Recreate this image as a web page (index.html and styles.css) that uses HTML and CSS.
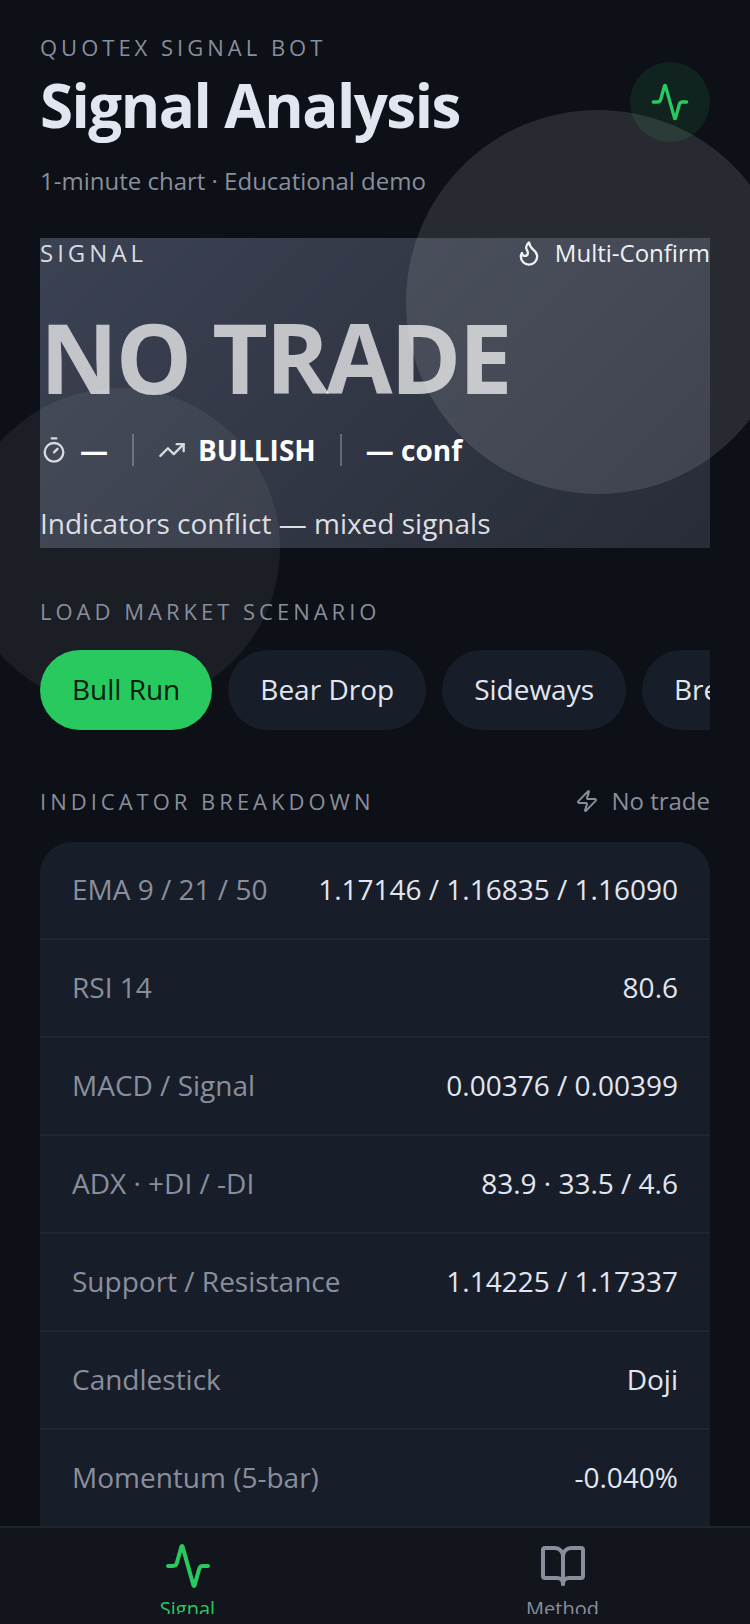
FILE: index.html
```
<!DOCTYPE html>
<html lang="en">
<head>
  <meta charset="UTF-8">
  <meta name="viewport" content="width=device-width, initial-scale=1">
  <title>Signal Analysis</title>
  <link rel="stylesheet" href="styles.css">
</head>
<body>
  <div class="app">
    <main class="screen">
      <header class="header">
        <div>
          <p class="eyebrow">QUOTEX SIGNAL BOT</p>
          <h1>Signal Analysis</h1>
          <p class="subtitle">1-minute chart · Educational demo</p>
        </div>
        <div class="badge">
          <svg class="icon icon-lg" viewBox="0 0 24 24"><path d="M22 12h-2.48a2 2 0 0 0-1.93 1.46l-2.35 8.36a.25.25 0 0 1-.48 0L9.24 2.18a.25.25 0 0 0-.48 0l-2.35 8.36A2 2 0 0 1 4.49 12H2"/></svg>
        </div>
      </header>

      <section class="hero">
        <div class="blob blob-top"></div>
        <div class="blob blob-bottom"></div>
        <div class="hero-content">
          <div class="hero-head">
            <span class="hero-label">SIGNAL</span>
            <span class="tag">
              <svg class="icon icon-md" viewBox="0 0 24 24"><path d="M8.5 14.5A2.5 2.5 0 0 0 11 12c0-1.38-.5-2-1-3-1.072-2.143-.224-4.054 2-6 .5 2.5 2 4.9 4 6.5 2 1.6 3 3.5 3 5.5a7 7 0 1 1-14 0c0-1.153.433-2.294 1-3a2.5 2.5 0 0 0 2.5 2.5z"/></svg>
              Multi-Confirm
            </span>
          </div>
          <p class="hero-signal">NO TRADE</p>
          <div class="hero-meta">
            <span class="meta-item">
              <svg class="icon icon-md" viewBox="0 0 24 24"><path d="M10 2h4M12 14l3-3"/><circle cx="12" cy="14" r="8"/></svg>
              —
            </span>
            <span class="divider"></span>
            <span class="meta-item">
              <svg class="icon icon-md" viewBox="0 0 24 24"><path d="M22 7l-8.5 8.5-5-5L2 17"/><path d="M16 7h6v6"/></svg>
              BULLISH
            </span>
            <span class="divider"></span>
            <span class="meta-item">— conf</span>
          </div>
          <p class="hero-reason">Indicators conflict — mixed signals</p>
        </div>
      </section>

      <section class="scenarios">
        <h2 class="eyebrow">LOAD MARKET SCENARIO</h2>
        <div class="pills">
          <button type="button" class="pill active">Bull Run</button>
          <button type="button" class="pill">Bear Drop</button>
          <button type="button" class="pill">Sideways</button>
          <button type="button" class="pill">Breakout</button>
        </div>
      </section>

      <section class="breakdown">
        <div class="section-head">
          <h2 class="eyebrow">INDICATOR BREAKDOWN</h2>
          <span class="tag tag-muted">
            <svg class="icon icon-sm" viewBox="0 0 24 24"><path d="M4 14a1 1 0 0 1-.78-1.63l9.9-10.2a.5.5 0 0 1 .86.46l-1.92 6.02A1 1 0 0 0 13 10h7a1 1 0 0 1 .78 1.63l-9.9 10.2a.5.5 0 0 1-.86-.46l1.92-6.02A1 1 0 0 0 11 14z"/></svg>
            No trade
          </span>
        </div>
        <table class="indicators">
          <tbody>
            <tr><th scope="row">EMA 9 / 21 / 50</th><td>1.17146 / 1.16835 / 1.16090</td></tr>
            <tr><th scope="row">RSI 14</th><td>80.6</td></tr>
            <tr><th scope="row">MACD / Signal</th><td>0.00376 / 0.00399</td></tr>
            <tr><th scope="row">ADX · +DI / -DI</th><td>83.9 · 33.5 / 4.6</td></tr>
            <tr><th scope="row">Support / Resistance</th><td>1.14225 / 1.17337</td></tr>
            <tr><th scope="row">Candlestick</th><td>Doji</td></tr>
            <tr><th scope="row">Momentum (5-bar)</th><td>-0.040%</td></tr>
          </tbody>
        </table>
      </section>
    </main>

    <nav class="tabbar">
      <a href="#signal" class="tab active">
        <svg class="icon icon-xl" viewBox="0 0 24 24"><path d="M22 12h-2.48a2 2 0 0 0-1.93 1.46l-2.35 8.36a.25.25 0 0 1-.48 0L9.24 2.18a.25.25 0 0 0-.48 0l-2.35 8.36A2 2 0 0 1 4.49 12H2"/></svg>
        <span>Signal</span>
      </a>
      <a href="#method" class="tab">
        <svg class="icon icon-xl" viewBox="0 0 24 24"><path d="M12 7v14"/><path d="M3 18a1 1 0 0 1-1-1V4a1 1 0 0 1 1-1h5a4 4 0 0 1 4 4 4 4 0 0 1 4-4h5a1 1 0 0 1 1 1v13a1 1 0 0 1-1 1h-6a3 3 0 0 0-3 3 3 3 0 0 0-3-3z"/></svg>
        <span>Method</span>
      </a>
    </nav>
  </div>
</body>
</html>
```
FILE: styles.css
```
* {
  box-sizing: border-box;
}
body {
  margin: 0;
  background: #0d1017;
  color: #e2e6f0;
  font-family: "Open Sans", "Noto Sans", sans-serif;
  font-size: 28px;
}
h1, h2, p {
  margin: 0;
}
.app {
  display: flex;
  flex-direction: column;
  height: 100vh;
}
.screen {
  flex: 1;
  min-height: 0;
  overflow: hidden;
  padding: 32px 40px 0;
}

/* icons */
.icon {
  display: block;
  flex: none;
  fill: none;
  stroke: currentColor;
  stroke-width: 2;
  stroke-linecap: round;
  stroke-linejoin: round;
}
.icon-sm { width: 24px; height: 24px; }
.icon-md { width: 28px; height: 28px; }
.icon-lg { width: 40px; height: 40px; }
.icon-xl { width: 48px; height: 48px; }

/* header */
.header {
  display: flex;
  justify-content: space-between;
  align-items: flex-start;
}
.eyebrow {
  color: #898e9c;
  font-size: 22px;
  font-weight: 400;
  line-height: 30px;
  letter-spacing: 4px;
}
h1 {
  margin-top: 8px;
  font-size: 60px;
  font-weight: 700;
  line-height: 70px;
  letter-spacing: -0.025em;
}
.subtitle {
  margin-top: 24px;
  color: #898e9c;
  font-size: 24px;
  line-height: 34px;
}
.badge {
  display: flex;
  align-items: center;
  justify-content: center;
  width: 80px;
  height: 80px;
  margin-top: 30px;
  border-radius: 50%;
  background: #11231f;
  color: #28c95f;
}

/* signal card */
.hero {
  position: relative;
  margin-top: 40px;
  background: linear-gradient(135deg, #3b4252, #282c38);
}
.blob {
  position: absolute;
  border-radius: 50%;
}
.blob-top {
  top: -128px;
  right: -80px;
  width: 384px;
  height: 384px;
  background: rgba(255, 255, 255, 0.11);
}
.blob-bottom {
  bottom: -160px;
  left: -80px;
  width: 320px;
  height: 320px;
  background: rgba(255, 255, 255, 0.06);
}
.hero-content {
  position: relative;
}
.hero-head,
.section-head {
  display: flex;
  justify-content: space-between;
  align-items: center;
}
.hero-label {
  color: #d8dae0;
  font-size: 24px;
  line-height: 30px;
  letter-spacing: 4px;
}
.tag {
  display: flex;
  align-items: center;
  gap: 12px;
  color: #f0f1f4;
  font-size: 24px;
  line-height: 30px;
}
.tag-muted {
  color: #898e9c;
}
.hero-signal {
  margin-top: 36px;
  color: rgba(255, 255, 255, 0.7);
  font-size: 96px;
  font-weight: 700;
  line-height: 106px;
  letter-spacing: -0.025em;
}
.hero-meta {
  display: flex;
  align-items: center;
  gap: 24px;
  margin-top: 24px;
  color: #fff;
  font-weight: 700;
  line-height: 32px;
}
.meta-item {
  display: flex;
  align-items: center;
  gap: 12px;
}
.meta-item .icon {
  color: #d8dae0;
}
.divider {
  width: 2px;
  height: 32px;
  background: rgba(255, 255, 255, 0.25);
}
.hero-reason {
  margin-top: 32px;
  color: #dcdee4;
  line-height: 50px;
}

/* scenarios */
.scenarios {
  position: relative;
  margin-top: 48px;
}
.pills {
  display: flex;
  gap: 16px;
  margin-top: 24px;
  overflow: hidden;
}
.pill {
  flex: none;
  height: 80px;
  padding: 0 32px 2px;
  border: 0;
  border-radius: 40px;
  background: #181e29;
  color: #e2e6f0;
  font: inherit;
}
.pill.active {
  background: #28c95f;
  color: #06200f;
}

/* indicator table */
.breakdown {
  margin-top: 56px;
}
.indicators,
.indicators tbody {
  display: block;
}
.indicators {
  margin-top: 26px;
  border-radius: 32px 32px 0 0;
  background: #181e29;
}
.indicators tr {
  display: flex;
  justify-content: space-between;
  gap: 24px;
  padding: 28px 32px 30px;
  border-bottom: 2px solid #20262f;
}
.indicators tr:last-child {
  border-bottom: 0;
}
.indicators th,
.indicators td {
  padding: 0;
  font-weight: 400;
  line-height: 38px;
}
.indicators th {
  color: #898e9c;
  text-align: left;
}
.indicators td {
  text-align: right;
}

/* bottom tabs */
.tabbar {
  display: flex;
  flex: none;
  height: 98px;
  padding-bottom: 10px;
  border-top: 2px solid #20242c;
  background: #12151c;
}
.tab {
  display: flex;
  flex: 1;
  flex-direction: column;
  align-items: center;
  gap: 4px;
  padding-top: 14px;
  overflow: hidden;
  color: #898e9c;
  font-size: 20px;
  line-height: 30px;
  text-decoration: none;
}
.tab.active {
  color: #28c95f;
}
```
